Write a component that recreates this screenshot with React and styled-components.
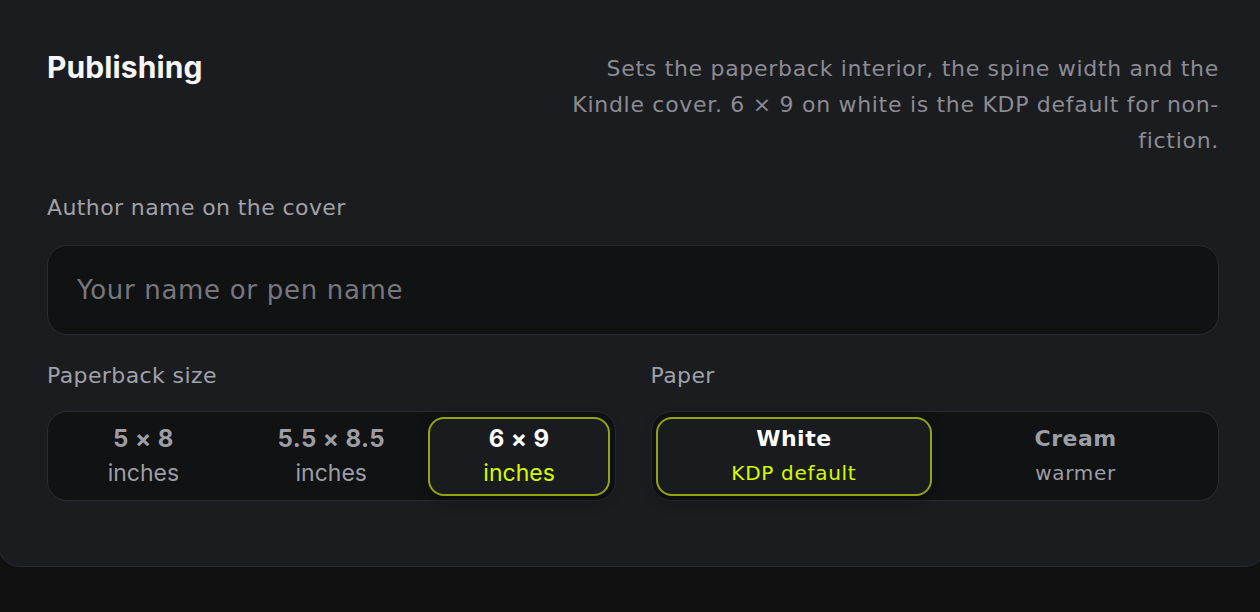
import React, { useState } from 'react'
import styled, { createGlobalStyle } from 'styled-components'

const GlobalStyle = createGlobalStyle`
  html, body {
    margin: 0;
    padding: 0;
    background: #111112;
    overflow: hidden;
  }
  body {
    font-family: 'DejaVu Sans', 'Noto Sans', sans-serif;
    -webkit-font-smoothing: antialiased;
  }
`

const Card = styled.section`
  box-sizing: border-box;
  width: 1269px;
  margin: -30px 0 0 -2px;
  padding: 80px 47px 65px 48px;
  background: #1b1c20;
  border: 1px solid #2a2b30;
  border-radius: 22px;
`

const Header = styled.header`
  display: flex;
  justify-content: space-between;
  align-items: flex-start;
  gap: 40px;
`

const Title = styled.h2`
  margin: -2px 0 0;
  font-family: 'Inter', sans-serif;
  font-size: 30px;
  font-weight: 700;
  letter-spacing: 0.1px;
  line-height: 36px;
  color: #f6f6f7;
`

const Description = styled.p`
  margin: 0;
  max-width: 652px;
  text-align: right;
  font-size: 22px;
  letter-spacing: 0.7px;
  line-height: 36px;
  color: #8b8b93;
`

const Field = styled.div`
  display: flex;
  flex-direction: column;
  gap: ${p => p.$gap}px;
  margin-top: ${p => p.$top || 0}px;
`

const Label = styled.label`
  font-size: 22px;
  letter-spacing: 0.4px;
  line-height: 26px;
  color: #a1a1a9;
`

const Input = styled.input`
  box-sizing: border-box;
  width: 100%;
  height: 90px;
  padding: 0 29px;
  background: #111214;
  border: 1.5px solid #2b2c31;
  border-radius: 20px;
  font-family: inherit;
  font-size: 26px;
  letter-spacing: 0.7px;
  color: #e4e4e7;
  outline: none;

  &::placeholder {
    color: #77777f;
  }
`

const Row = styled.div`
  display: grid;
  grid-template-columns: 1fr 1fr;
  gap: 35px;
  margin-top: 28px;
`

const Segmented = styled.div`
  box-sizing: border-box;
  display: grid;
  grid-template-columns: repeat(${p => p.$count}, 1fr);
  gap: 6px;
  height: 90px;
  padding: 4.5px;
  background: #111214;
  border: 1.5px solid #2b2c31;
  border-radius: 20px;
`

const Option = styled.button`
  display: flex;
  flex-direction: column;
  align-items: center;
  justify-content: center;
  gap: 6px;
  padding: 0;
  background: ${p => (p.$active ? '#1a1b1f' : 'transparent')};
  border: 2px solid ${p => (p.$active ? '#93a611' : 'transparent')};
  border-radius: 16px;
  box-shadow: ${p => (p.$active ? '0 4px 14px rgba(0, 0, 0, 0.35)' : 'none')};
  cursor: pointer;
`

const OptionTitle = styled.span`
  font-family: ${p => (p.$system ? "'Inter', sans-serif" : "'DejaVu Sans', sans-serif")};
  font-size: ${p => (p.$system ? 24 : 22)}px;
  font-weight: 700;
  letter-spacing: ${p => (p.$system ? 0.4 : 0.5)}px;
  line-height: 28px;
  color: ${p => (p.$active ? '#ffffff' : '#9d9da5')};
`

const OptionSub = styled.span`
  font-family: ${p => (p.$system ? "'Inter', sans-serif" : "'DejaVu Sans', sans-serif")};
  font-size: ${p => (p.$system ? 23 : 20)}px;
  letter-spacing: ${p => (p.$system ? 0 : 0.7)}px;
  line-height: 28px;
  color: ${p => (p.$active ? '#d6fb00' : '#9d9da5')};
`

const sizes = [
  { id: '5x8', title: '5 × 8', sub: 'inches' },
  { id: '5.5x8.5', title: '5.5 × 8.5', sub: 'inches' },
  { id: '6x9', title: '6 × 9', sub: 'inches' }
]

const papers = [
  { id: 'white', title: 'White', sub: 'KDP default' },
  { id: 'cream', title: 'Cream', sub: 'warmer' }
]

const Choice = ({ options, value, onChange, system }) => (
  <Segmented $count={options.length}>
    {options.map(o => {
      const active = o.id === value
      return (
        <Option key={o.id} $active={active} onClick={() => onChange(o.id)}>
          <OptionTitle $active={active} $system={system}>
            {o.title}
          </OptionTitle>
          <OptionSub $active={active} $system={system}>
            {o.sub}
          </OptionSub>
        </Option>
      )
    })}
  </Segmented>
)

const App = () => {
  const [size, setSize] = useState('6x9')
  const [paper, setPaper] = useState('white')

  return (
    <>
      <GlobalStyle />
      <Card>
        <Header>
          <Title>Publishing</Title>
          <Description>
            Sets the paperback interior, the spine width and the Kindle cover. 6 × 9 on white is the
            KDP default for non-fiction.
          </Description>
        </Header>
        <Field $gap={24} $top={36}>
          <Label>Author name on the cover</Label>
          <Input placeholder="Your name or pen name" />
        </Field>
        <Row>
          <Field $gap={22}>
            <Label>Paperback size</Label>
            <Choice options={sizes} value={size} onChange={setSize} system />
          </Field>
          <Field $gap={22}>
            <Label>Paper</Label>
            <Choice options={papers} value={paper} onChange={setPaper} />
          </Field>
        </Row>
      </Card>
    </>
  )
}

export default App
